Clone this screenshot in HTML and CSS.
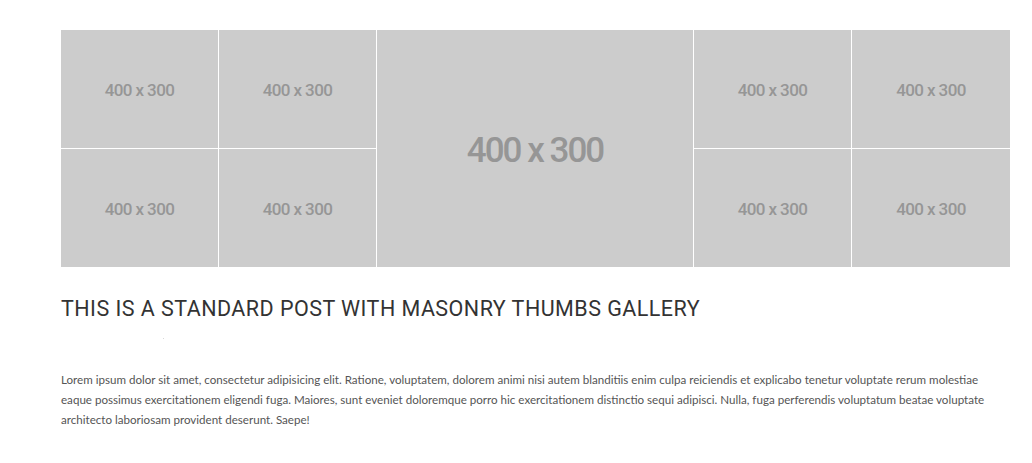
FILE: index.html
```html
<!DOCTYPE html>
<html>
<head>
<meta charset="utf-8">
<link rel="stylesheet" href="styles.css">
</head>
<body>
<article class="post">
  <div class="gallery">
    <div class="thumb">400 x 300</div>
    <div class="thumb">400 x 300</div>
    <div class="thumb big">400 x 300</div>
    <div class="thumb">400 x 300</div>
    <div class="thumb">400 x 300</div>
    <div class="thumb">400 x 300</div>
    <div class="thumb">400 x 300</div>
    <div class="thumb">400 x 300</div>
    <div class="thumb">400 x 300</div>
  </div>
  <h2 class="title">THIS IS A STANDARD POST WITH MASONRY THUMBS GALLERY</h2>
  <div class="meta"><span class="dot"></span></div>
  <p class="excerpt">Lorem ipsum dolor sit amet, consectetur adipisicing elit. Ratione, voluptatem, dolorem animi nisi autem blanditiis enim culpa reiciendis et explicabo tenetur voluptate rerum molestiae eaque possimus exercitationem eligendi fuga. Maiores, sunt eveniet doloremque porro hic exercitationem distinctio sequi adipisci. Nulla, fuga perferendis voluptatum beatae voluptate architecto laboriosam provident deserunt. Saepe!</p>
</article>
</body>
</html>
```
FILE: styles.css
```css
html, body {
  margin: 0;
  padding: 0;
  background: #ffffff;
}
.post {
  width: 949px;
  margin: 0 0 0 61px;
  padding-top: 30px;
}
.gallery {
  display: grid;
  grid-template-columns: 157px 157px 316px 157px 158px;
  grid-template-rows: 118px 118px;
  gap: 1px;
  background: #ffffff;
}
.thumb {
  background: #cccccc;
  color: #969696;
  font-family: Roboto, sans-serif;
  font-weight: 500;
  font-size: 17px;
  letter-spacing: -0.6px;
  display: flex;
  align-items: center;
  justify-content: center;
  padding-top: 2px;
}
.thumb.big {
  grid-row: 1 / span 2;
  grid-column: 3;
  font-size: 35px;
  letter-spacing: -2px;
  padding-top: 4px;
}
.title {
  margin: 30px 0 0 0;
  font-family: Roboto, sans-serif;
  font-weight: 400;
  font-size: 21.5px;
  line-height: 24px;
  color: #333333;
  letter-spacing: 0.46px;
}
.meta {
  height: 20px;
  padding-left: 102px;
  margin-top: 4px;
}
.dot {
  display: inline-block;
  width: 1px;
  height: 1px;
  background: #d8d8d8;
}
.excerpt {
  margin: 25px 0 0 0;
  font-family: Lato, sans-serif;
  font-size: 11.6px;
  line-height: 20px;
  color: #555555;
}
```
